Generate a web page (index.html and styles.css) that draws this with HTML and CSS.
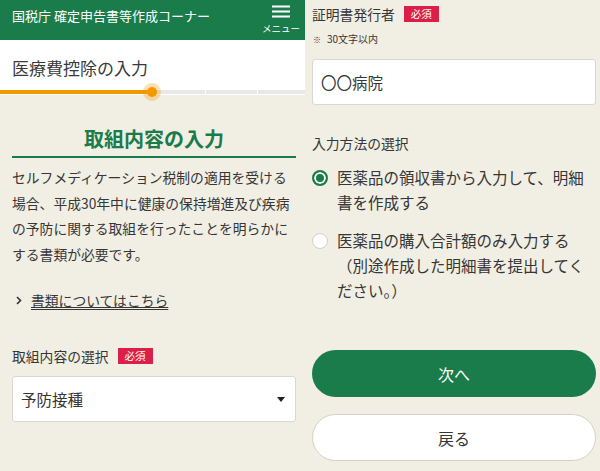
FILE: index.html
```html
<!DOCTYPE html>
<html lang="ja">
<head>
  <meta charset="UTF-8" />
  <meta name="viewport" content="width=device-width, initial-scale=1.0"/>
  <title>医療費控除の入力 - 確定申告書等作成コーナー</title>
  <link rel="stylesheet" href="styles.css">
</head>
<body>
<div class="screen left">
  <header class="topbar">
    <h1>国税庁 確定申告書等作成コーナー</h1>
    <button class="menu">
      <svg width="18" height="14" viewBox="0 0 18 14"><path d="M0 1.5h18M0 6.5h18M0 11.5h18" stroke="#fff" stroke-width="2"/></svg>
      <span>メニュー</span>
    </button>
  </header>
  <div class="page-head">
    <div class="page-title">医療費控除の入力</div>
    <div class="progress">
      <div class="seg first"></div><div class="seg step"></div><div class="seg step"></div><div class="seg"></div>
      <div class="fill"></div>
      <div class="dot"></div>
    </div>
  </div>
  <main class="content">
    <h2 class="section-title">取組内容の入力</h2>
    <p class="lead">セルフメディケーション税制の適用を受ける場合、平成30年中に健康の保持増進及び疾病の予防に関する取組を行ったことを明らかにする書類が必要です。</p>
    <a class="more" href="#">
      <svg width="6" height="9" viewBox="0 0 6 9"><path d="M1 1l3.5 3.5L1 8" fill="none" stroke="#333" stroke-width="1.6"/></svg>
      <span>書類についてはこちら</span>
    </a>
    <div class="label label-gap">取組内容の選択<span class="badge">必須</span></div>
    <div class="select">
      <span>予防接種</span>
      <svg width="8" height="5" viewBox="0 0 8 5"><path d="M0 0h8L4 5z" fill="#222"/></svg>
    </div>
  </main>
</div>

<div class="screen right">
  <div class="label top">証明書発行者<span class="badge">必須</span></div>
  <div class="note"><span class="mark">※</span>30文字以内</div>
  <div class="input">〇〇病院</div>

  <div class="label legend">入力方法の選択</div>
  <label class="radio">
    <span class="circle on"></span>
    <span class="text">医薬品の領収書から入力して、明細書を作成する</span>
  </label>
  <label class="radio second">
    <span class="circle"></span>
    <span class="text">医薬品の購入合計額のみ入力する（別途作成した明細書を提出してください。）</span>
  </label>

  <button class="btn primary">次へ</button>
  <button class="btn back">戻る</button>
</div>
</body>
</html>
```

FILE: styles.css
```css
* { box-sizing: border-box; }
body { margin: 0; width: 600px; height: 471px; overflow: hidden; display: flex; background: #f1eee4; color: #363636; font-family: "Noto Sans CJK JP", "Noto Sans", sans-serif; }
.screen { height: 471px; }
.left { width: 305px; flex: none; }
.right { flex: 1; padding: 0 4px 0 7px; }

/* top bar */
.topbar { height: 40px; background: #1a7c4a; display: flex; align-items: center; justify-content: space-between; padding: 0 4px 0 12px; }
.topbar h1 { margin: 0 0 8px; font-size: 13px; font-weight: normal; color: #fff; line-height: 18px; }
.menu { width: 40px; background: none; border: none; padding: 0; margin-bottom: 2px; display: flex; flex-direction: column; align-items: center; color: #fff; font-family: inherit; }
.menu span { font-size: 9.5px; line-height: 12px; margin-top: 3px; white-space: nowrap; }

/* page heading + progress */
.page-head { background: #fff; padding: 16px 0 1px; }
.page-title { padding-left: 12px; font-size: 17px; line-height: 24px; color: #3a3a3a; margin-bottom: 10px; }
.progress { position: relative; height: 4px; display: flex; gap: 1px; background: #fff; }
.seg { flex: 1; background: #e8e8e8; }
.seg.first { flex: none; width: 153px; }
.seg.step { flex: none; width: 51px; }
.fill { position: absolute; left: 0; top: 0; width: 152px; height: 4px; background: #f39800; }
.dot { position: absolute; left: 147px; top: -3px; width: 10px; height: 10px; border-radius: 50%; background: #f39800; box-shadow: 0 0 0 4px rgba(243, 152, 0, .3); }

/* left content */
.content { padding: 30px 9px 0 12px; }
.section-title { margin: 0; padding-bottom: 3px; border-bottom: 2px solid #1a7c4a; text-align: center; font-size: 20px; line-height: 28px; color: #1a7c4a; font-weight: bold; }
.lead { margin: 7px 0 0; font-size: 13.8px; line-height: 25.5px; }
.more { display: flex; align-items: center; gap: 9px; margin-top: 23px; padding-left: 4px; line-height: 20px; color: #363636; font-size: 13.8px; }
.more span { text-decoration: underline; text-underline-offset: 3px; }

.label { font-size: 13.8px; line-height: 20px; display: flex; align-items: center; }
.label-gap { margin-top: 36px; }
.badge { display: inline-block; margin-left: 9px; padding: 0 7px; height: 16px; line-height: 16px; background: #dc1f48; color: #fff; font-size: 10.5px; }

.select { margin-top: 10px; height: 46px; background: #fff; border: 1px solid #dcd8cf; border-radius: 3px; display: flex; align-items: center; justify-content: space-between; padding: 0 10px 0 8px; font-size: 15.5px; }

/* right side */
.top { margin-top: 4px; }
.note { margin-top: 8px; font-size: 10px; line-height: 14px; }
.note .mark { font-size: 8px; margin: 0 6px 0 1px; }
.input { margin-top: 12px; height: 46px; background: #fff; border: 1px solid #dcd8cf; border-radius: 3px; display: flex; align-items: center; padding-left: 8px; font-size: 15.5px; }
.legend { margin-top: 28px; }

.radio { display: flex; align-items: flex-start; gap: 9px; margin-top: 12px; font-size: 15.5px; line-height: 25px; }
.radio.second { margin-top: 13px; }
.circle { flex: none; width: 16px; height: 16px; margin-top: 5px; border-radius: 50%; background: #fff; border: 1px solid #d6cfc2; }
.circle.on { border: 2px solid #1a7c4a; box-shadow: inset 0 0 0 2px #fff; background: #1a7c4a; }

.btn { display: block; width: 100%; height: 47px; border-radius: 24px; font-family: inherit; font-size: 16px; }
.primary { margin-top: 47px; background: #1a7c4a; color: #fff; border: none; }
.back { margin-top: 17px; background: #fff; color: #363636; border: 1px solid #d8d1c2; }
```
